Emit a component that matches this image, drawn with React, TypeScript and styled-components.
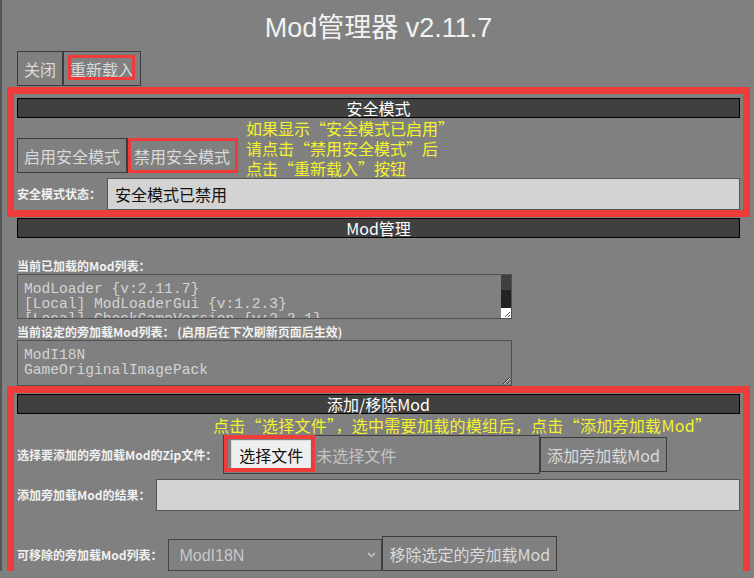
import React from 'react';
import styled, { createGlobalStyle } from 'styled-components';

const CJK = `"Noto Sans CJK SC", "Liberation Sans", sans-serif`;
const LATIN = `"Liberation Sans", "Noto Sans CJK SC", sans-serif`;
const MONO = `"Liberation Mono", "DejaVu Sans Mono", monospace`;
const RED = '#f03b3b';

const GlobalStyle = createGlobalStyle`
  html, body { margin: 0; padding: 0; overflow: hidden; background: #808080; }
  body { border-left: 2px solid #555; font-family: ${CJK}; color: #f0f0f0; }
  * { box-sizing: border-box; }
`;

const Page = styled.div`
  padding: 0 14px 0 15px;
`;

const Title = styled.div`
  height: 51px;
  display: flex;
  align-items: center;
  justify-content: center;
  font-family: ${LATIN};
  font-size: 27px;
  color: #f2f2f2;
`;

const Toolbar = styled.div`
  display: flex;
`;

const Btn = styled.button`
  position: relative;
  height: 35px;
  padding: 0 6px;
  margin: 0;
  background: #808080;
  border: 1px solid #3c3c3c;
  color: #dadada;
  font-family: ${CJK};
  font-size: 16px;
  line-height: 1;
  white-space: nowrap;
`;

const Mark = styled.span<{ $t: number; $r: number; $b: number; $l: number; $w: number }>`
  position: absolute;
  top: ${p => p.$t}px;
  right: ${p => p.$r}px;
  bottom: ${p => p.$b}px;
  left: ${p => p.$l}px;
  border: ${p => p.$w}px solid ${RED};
  pointer-events: none;
`;

const Section = styled.section<{ $mt: number }>`
  position: relative;
  margin-top: ${p => p.$mt}px;
`;

const Header = styled.div`
  height: 20px;
  border: 1px solid #000;
  background: #404040;
  color: #fff;
  font-size: 16px;
  line-height: 18px;
  text-align: center;
`;

const SafeRow = styled.div`
  display: flex;
  align-items: flex-end;
`;

const BtnGroup = styled.div<{ $mb: number }>`
  display: flex;
  margin-bottom: ${p => p.$mb}px;
`;

const Note = styled.div`
  margin-left: 9px;
  color: #f4f42c;
  font-size: 16px;
  line-height: 20px;
`;

const Note2 = styled.div`
  padding-left: 196px;
  color: #f4f42c;
  font-size: 16px;
  line-height: 20px;
  letter-spacing: 0.3px;
  white-space: nowrap;
  margin-top: 1px;
`;

const Row = styled.div<{ $mt?: number; $h?: number }>`
  display: flex;
  align-items: center;
  gap: 6px;
  margin-top: ${p => p.$mt ?? 0}px;
  ${p => (p.$h ? `height: ${p.$h}px;` : '')}
`;

const Inline = styled.div`
  display: flex;
  align-items: center;
`;

const BottomRow = styled.div<{ $mt: number }>`
  display: flex;
  align-items: flex-end;
  margin-top: ${p => p.$mt}px;
`;

const FieldLabel = styled.div<{ $lh?: number }>`
  font-size: 12px;
  font-weight: bold;
  color: #f0f0f0;
  white-space: nowrap;
  line-height: ${p => p.$lh ?? 16}px;
`;

const BlockLabel = styled.div<{ $mt: number }>`
  margin-top: ${p => p.$mt}px;
  font-size: 12px;
  font-weight: bold;
  color: #f0f0f0;
  line-height: 16px;
  white-space: nowrap;
`;

const TextInput = styled.input`
  flex: 1;
  height: 32px;
  background: #d3d3d3;
  border: 1px solid #555;
  padding: 0 7px;
  font-family: ${CJK};
  font-size: 16px;
  color: #111;
  outline: none;
`;

const AreaWrap = styled.div`
  position: relative;
  width: 495px;
`;

const ListArea = styled.textarea<{ $h: number; $fixed?: boolean }>`
  display: block;
  width: 495px;
  height: ${p => p.$h}px;
  margin: 0;
  padding: 7px 6px;
  background: #808080;
  border: 1px solid #505050;
  color: #d4d4d4;
  font-family: ${MONO};
  font-size: 14.6px;
  line-height: 15px;
  outline: none;
  overflow: hidden;
  resize: ${p => (p.$fixed ? 'none' : 'both')};
`;

const ScrollBar = styled.div`
  position: absolute;
  top: 1px;
  right: 1px;
  bottom: 1px;
  width: 10px;
  display: flex;
  flex-direction: column;
  pointer-events: none;
`;

const ScrollTrack = styled.div`
  height: 15px;
  background: #404040;
`;

const ScrollThumb = styled.div`
  flex: 1;
  background: #222;
`;

const ScrollCorner = styled.div`
  height: 10px;
  background: #fff;
  display: flex;
  align-items: flex-end;
  justify-content: flex-end;
`;

const FileBox = styled.div`
  width: 317px;
  height: 39px;
  display: flex;
  align-items: center;
  padding-left: 7px;
  border: 1px solid #404040;
`;

const FileBtn = styled.span`
  position: relative;
  height: 30px;
  display: flex;
  align-items: center;
  padding: 0 7px;
  background: #efefef;
  border: 1px solid #dcdcdc;
  color: #111;
  font-size: 16px;
`;

const NoFile = styled.span`
  margin-left: 5px;
  color: #c4c4c4;
  font-size: 16px;
`;

const SelectWrap = styled.div`
  position: relative;
  width: 214px;
  height: 32px;
  margin-left: 6px;
`;

const Select = styled.select`
  width: 100%;
  height: 100%;
  appearance: none;
  background: #808080;
  border: 1px solid #444;
  padding: 0 10px;
  color: #c8c8c8;
  font-family: ${LATIN};
  font-size: 16px;
  outline: none;
`;

const Chevron = styled.svg`
  position: absolute;
  right: 6px;
  top: 13px;
  pointer-events: none;
`;

const Frame = styled.div<{ $t: number; $r: number; $b: number; $l: number }>`
  position: absolute;
  top: ${p => p.$t}px;
  right: ${p => p.$r}px;
  bottom: ${p => p.$b}px;
  left: ${p => p.$l}px;
  border: 7px solid ${RED};
  pointer-events: none;
`;

const loaded = `ModLoader {v:2.11.7}
[Local] ModLoaderGui {v:1.2.3}
[Local] CheckGameVersion {v:2.2.1}
[Local] ModI18N {v:2.0.0}
[Local] GameOriginalImagePack {v:1.0.0}`;

const sideload = `ModI18N
GameOriginalImagePack`;

export default function App() {
  return (
    <>
      <GlobalStyle />
      <Page>
        <Title>Mod管理器 v2.11.7</Title>
        <Toolbar>
          <Btn>关闭</Btn>
          <Btn>
            重新载入
            <Mark $t={3} $r={5} $b={5} $l={4} $w={3} />
          </Btn>
        </Toolbar>

        <Section $mt={12}>
          <Header>安全模式</Header>
          <SafeRow>
            <BtnGroup $mb={5}>
              <Btn>启用安全模式</Btn>
              <Btn>
                禁用安全模式
                <Mark $t={-1} $r={-2} $b={-1} $l={0} $w={3} />
              </Btn>
            </BtnGroup>
            <Note>
              如果显示“安全模式已启用”
              <br />
              请点击“禁用安全模式”后
              <br />
              点击“重新载入”按钮
            </Note>
          </SafeRow>
          <Row>
            <FieldLabel>安全模式状态：</FieldLabel>
            <TextInput readOnly value="安全模式已禁用" />
          </Row>
          <Frame $t={-11} $r={-10} $b={-7} $l={-10} />
        </Section>

        <Section $mt={8}>
          <Header>Mod管理</Header>
          <BlockLabel $mt={20}>当前已加载的Mod列表：</BlockLabel>
          <AreaWrap>
            <ListArea $h={45} $fixed readOnly value={loaded} />
            <ScrollBar>
              <ScrollTrack />
              <ScrollThumb />
              <ScrollCorner>
                <svg width="8" height="8" viewBox="0 0 8 8">
                  <path d="M7 2L2 7M7 5L5 7" stroke="#555" strokeWidth="1" />
                </svg>
              </ScrollCorner>
            </ScrollBar>
          </AreaWrap>
          <BlockLabel $mt={5}>当前设定的旁加载Mod列表： (启用后在下次刷新页面后生效)</BlockLabel>
          <ListArea $h={46} readOnly value={sideload} />
        </Section>

        <Section $mt={8}>
          <Header>添加/移除Mod</Header>
          <Note2>点击“选择文件”，选中需要加载的模组后，点击“添加旁加载Mod”</Note2>
          <Row $h={39}>
            <FieldLabel>选择要添加的旁加载Mod的Zip文件：</FieldLabel>
            <Inline>
              <FileBox>
                <FileBtn>
                  选择文件
                  <Mark $t={-6} $r={-5} $b={-3} $l={-8} $w={4} />
                </FileBtn>
                <NoFile>未选择文件</NoFile>
              </FileBox>
              <Btn>添加旁加载Mod</Btn>
            </Inline>
          </Row>
          <Row $mt={5}>
            <FieldLabel>添加旁加载Mod的结果：</FieldLabel>
            <TextInput readOnly value="" />
          </Row>
          <BottomRow $mt={25}>
            <FieldLabel $lh={32}>可移除的旁加载Mod列表：</FieldLabel>
            <SelectWrap>
              <Select defaultValue="ModI18N">
                <option>ModI18N</option>
                <option>GameOriginalImagePack</option>
              </Select>
              <Chevron width="9" height="6" viewBox="0 0 9 6">
                <path d="M1 1l3.5 3.5L8 1" fill="none" stroke="#c8c8c8" strokeWidth="1.5" />
              </Chevron>
            </SelectWrap>
            <Btn>移除选定的旁加载Mod</Btn>
          </BottomRow>
          <Frame $t={-8} $r={-10} $b={-8} $l={-10} />
        </Section>
      </Page>
    </>
  );
}
